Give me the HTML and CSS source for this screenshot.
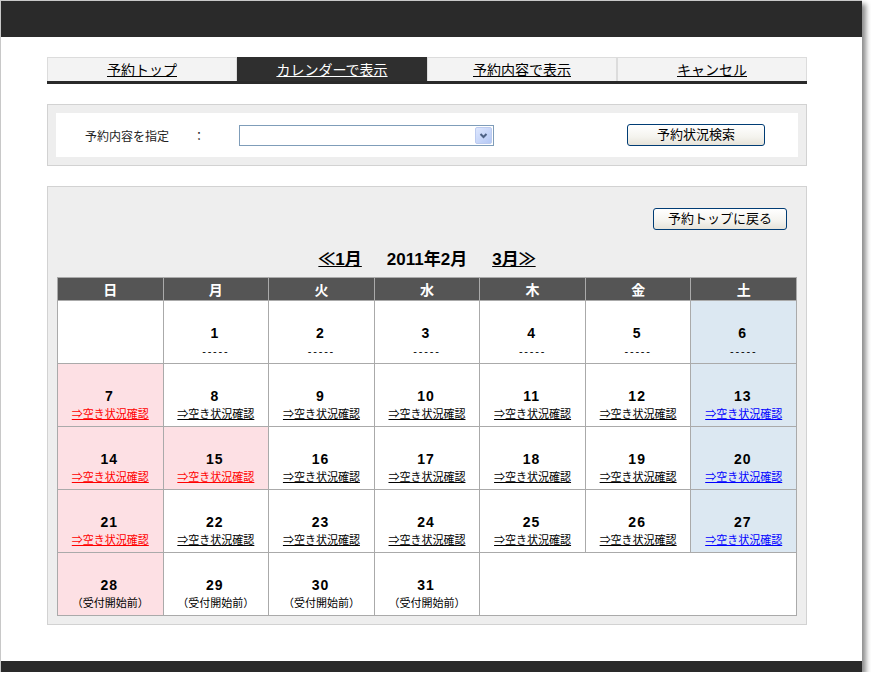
FILE: index.html
```html
<!DOCTYPE html>
<html lang="ja">
<head>
<meta charset="utf-8">
<title>カレンダーで表示</title>
<link rel="stylesheet" href="styles.css">
</head>
<body>
<div class="window">
  <div class="topbar"></div>
  <div class="main">
    <ul class="tabs">
      <li class="tab"><a href="#">予約トップ</a></li>
      <li class="tab active"><a href="#">カレンダーで表示</a></li>
      <li class="tab"><a href="#">予約内容で表示</a></li>
      <li class="tab"><a href="#">キャンセル</a></li>
    </ul>

    <div class="panel search">
      <div class="search-inner">
        <span class="label">予約内容を指定</span>
        <span class="colon">　：</span>
        <div class="select">
          <span class="select-arrow">
            <svg width="17" height="17" viewBox="0 0 17 17">
              <defs>
                <linearGradient id="ag" x1="0" y1="0" x2="1" y2="1">
                  <stop offset="0" stop-color="#dfe8fe"/>
                  <stop offset="1" stop-color="#b3c7f5"/>
                </linearGradient>
              </defs>
              <rect x="0.5" y="0.5" width="16" height="16" rx="1.5" fill="url(#ag)" stroke="#bccbef"/>
              <path d="M5.5 7 L8.5 10 L11.5 7" fill="none" stroke="#4d6185" stroke-width="2"/>
            </svg>
          </span>
        </div>
        <button class="btn btn-search" type="button">予約状況検索</button>
      </div>
    </div>

    <div class="panel calendar">
      <div class="back-row">
        <button class="btn btn-back" type="button">予約トップに戻る</button>
      </div>
      <div class="month-nav">
        <a href="#">≪1月</a>
        <span>2011年2月</span>
        <a href="#">3月≫</a>
      </div>
      <div class="cal">
        <div class="th">日</div>
        <div class="th">月</div>
        <div class="th">火</div>
        <div class="th">水</div>
        <div class="th">木</div>
        <div class="th">金</div>
        <div class="th">土</div>

        <div class="day"></div>
        <div class="day"><div class="num">1</div><div class="sub dash">-----</div></div>
        <div class="day"><div class="num">2</div><div class="sub dash">-----</div></div>
        <div class="day"><div class="num">3</div><div class="sub dash">-----</div></div>
        <div class="day"><div class="num">4</div><div class="sub dash">-----</div></div>
        <div class="day"><div class="num">5</div><div class="sub dash">-----</div></div>
        <div class="day sat"><div class="num">6</div><div class="sub dash">-----</div></div>

        <div class="day hol"><div class="num">7</div><div class="sub"><a href="#" class="red">⇒空き状況確認</a></div></div>
        <div class="day"><div class="num">8</div><div class="sub"><a href="#">⇒空き状況確認</a></div></div>
        <div class="day"><div class="num">9</div><div class="sub"><a href="#">⇒空き状況確認</a></div></div>
        <div class="day"><div class="num">10</div><div class="sub"><a href="#">⇒空き状況確認</a></div></div>
        <div class="day"><div class="num">11</div><div class="sub"><a href="#">⇒空き状況確認</a></div></div>
        <div class="day"><div class="num">12</div><div class="sub"><a href="#">⇒空き状況確認</a></div></div>
        <div class="day sat"><div class="num">13</div><div class="sub"><a href="#" class="blue">⇒空き状況確認</a></div></div>

        <div class="day hol"><div class="num">14</div><div class="sub"><a href="#" class="red">⇒空き状況確認</a></div></div>
        <div class="day hol"><div class="num">15</div><div class="sub"><a href="#" class="red">⇒空き状況確認</a></div></div>
        <div class="day"><div class="num">16</div><div class="sub"><a href="#">⇒空き状況確認</a></div></div>
        <div class="day"><div class="num">17</div><div class="sub"><a href="#">⇒空き状況確認</a></div></div>
        <div class="day"><div class="num">18</div><div class="sub"><a href="#">⇒空き状況確認</a></div></div>
        <div class="day"><div class="num">19</div><div class="sub"><a href="#">⇒空き状況確認</a></div></div>
        <div class="day sat"><div class="num">20</div><div class="sub"><a href="#" class="blue">⇒空き状況確認</a></div></div>

        <div class="day hol"><div class="num">21</div><div class="sub"><a href="#" class="red">⇒空き状況確認</a></div></div>
        <div class="day"><div class="num">22</div><div class="sub"><a href="#">⇒空き状況確認</a></div></div>
        <div class="day"><div class="num">23</div><div class="sub"><a href="#">⇒空き状況確認</a></div></div>
        <div class="day"><div class="num">24</div><div class="sub"><a href="#">⇒空き状況確認</a></div></div>
        <div class="day"><div class="num">25</div><div class="sub"><a href="#">⇒空き状況確認</a></div></div>
        <div class="day"><div class="num">26</div><div class="sub"><a href="#">⇒空き状況確認</a></div></div>
        <div class="day sat"><div class="num">27</div><div class="sub"><a href="#" class="blue">⇒空き状況確認</a></div></div>

        <div class="day hol"><div class="num">28</div><div class="sub">（受付開始前）</div></div>
        <div class="day"><div class="num">29</div><div class="sub">（受付開始前）</div></div>
        <div class="day"><div class="num">30</div><div class="sub">（受付開始前）</div></div>
        <div class="day"><div class="num">31</div><div class="sub">（受付開始前）</div></div>
        <div class="day span3"></div>
      </div>
    </div>
  </div>
  <div class="footbar"></div>
</div>
</body>
</html>
```

FILE: styles.css
```css
* { box-sizing: border-box; }

html, body {
  margin: 0;
  padding: 0;
  background: #fff;
}

body {
  font-family: "Liberation Sans", "Noto Sans CJK JP", sans-serif;
  color: #000;
}

.window {
  width: 862px;
  height: 672px;
  border-left: 1px solid #c8c8c8;
  border-top: 1px solid #c8c8c8;
  background: #fff;
  box-shadow: 4px 4px 5px rgba(0, 0, 0, 0.45);
  display: flex;
  flex-direction: column;
}

.topbar {
  height: 36px;
  background: #2a2a2a;
}

.main {
  flex: 1;
  padding: 20px 0 0 46px;
}

.footbar {
  height: 11px;
  background: #2a2a2a;
}

/* tabs */
.tabs {
  list-style: none;
  margin: 0;
  padding: 0;
  width: 760px;
  display: flex;
  border-bottom: 3px solid #2a2a2a;
}

.tab {
  flex: 1;
  height: 24px;
  background: #f3f3f3;
  border: 1px solid #dcdcdc;
  border-bottom: 0;
  display: flex;
  align-items: center;
  justify-content: center;
  font-size: 14px;
}

.tab a {
  color: #000;
  text-decoration: underline;
  line-height: 16px;
}

.tab.active {
  background: #2f2f2f;
  border-color: #2f2f2f;
}

.tab.active a {
  color: #fff;
}

/* panels */
.panel {
  width: 760px;
  border: 1px solid #d2d2d2;
  background: #eee;
  padding: 8px;
  margin-top: 20px;
}

.search-inner {
  background: #fff;
  height: 44px;
  display: flex;
  align-items: center;
  padding-left: 29px;
}

.label {
  width: 96px;
  font-size: 12px;
  color: #222;
  white-space: nowrap;
}

.colon {
  width: 58px;
  font-size: 12px;
  color: #222;
}

.select {
  width: 255px;
  height: 21px;
  border: 1px solid #7f9db9;
  background: #fff;
  display: flex;
  justify-content: flex-end;
  align-items: center;
  padding-right: 1px;
}

.select-arrow {
  display: flex;
}

.btn {
  height: 22px;
  border: 1px solid #003c74;
  border-radius: 3px;
  background: linear-gradient(#ffffff, #f4f3ee 60%, #e6e3d9);
  font-family: "Liberation Sans", "Noto Sans CJK JP", sans-serif;
  font-size: 13px;
  color: #000;
  padding: 0;
  line-height: 18px;
}

.btn-search {
  width: 138px;
  margin-left: 133px;
}

/* calendar panel */
.calendar {
  padding: 21px 9px 8px 9px;
}

.back-row {
  display: flex;
  justify-content: flex-end;
  padding-right: 10px;
}

.btn-back {
  width: 134px;
}

.month-nav {
  margin-top: 19px;
  margin-bottom: 6px;
  height: 22px;
  line-height: 22px;
  display: flex;
  justify-content: center;
  gap: 25px;
  font-size: 17px;
  font-weight: bold;
}

.month-nav a {
  color: #000;
  text-decoration: underline;
}

.cal {
  width: 740px;
  display: grid;
  grid-template-columns: repeat(7, 1fr);
  border-top: 1px solid #aaa;
  border-left: 1px solid #aaa;
}

.cal > div {
  border-right: 1px solid #aaa;
  border-bottom: 1px solid #aaa;
}

.th {
  height: 23px;
  background: #555;
  color: #fff;
  font-size: 14px;
  font-weight: bold;
  display: flex;
  align-items: center;
  justify-content: center;
}

.day {
  height: 63px;
  background: #fff;
  text-align: center;
  padding-top: 24px;
}

.day.hol { background: #fde0e4; }
.day.sat { background: #dce8f2; }
.day.span3 { grid-column: span 3; }

.num {
  font-size: 14px;
  font-weight: bold;
  line-height: 16px;
  letter-spacing: 1px;
  margin-right: 2px;
}

.sub {
  margin-top: 3px;
  font-size: 11px;
  line-height: 14px;
}

.sub.dash {
  letter-spacing: 1.8px;
}

.sub a {
  color: #000;
  text-decoration: underline;
}

.sub a.red { color: #f00; }
.sub a.blue { color: #00f; }
```
